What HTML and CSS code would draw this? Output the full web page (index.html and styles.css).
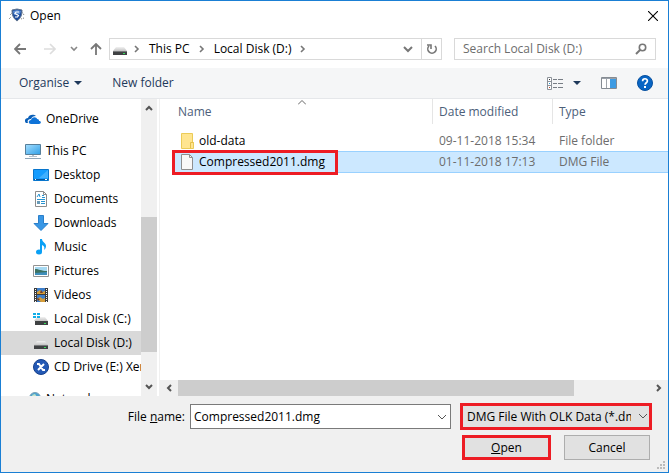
FILE: index.html
```html
<!DOCTYPE html>
<html lang="en">
<head>
    <meta charset="UTF-8">
    <meta name="viewport" content="width=device-width, initial-scale=1.0">
    <title>Open</title>
    <link rel="stylesheet" href="styles.css">
</head>
<body>
    <!-- Shared icons -->
    <svg class="sprite" aria-hidden="true">
        <linearGradient id="driveTop" x1="0" y1="0" x2="0" y2="1">
            <stop offset="0" stop-color="#f2f2f2"/><stop offset="1" stop-color="#c4c4c4"/>
        </linearGradient>
        <linearGradient id="screen" x1="0" y1="0" x2="1" y2="1">
            <stop offset="0" stop-color="#a5deff"/><stop offset="1" stop-color="#2f9fe6"/>
        </linearGradient>
        <symbol id="drive" viewBox="0 0 16 16">
            <path d="M4 6h8l3 4H1z" fill="url(#driveTop)"/>
            <path d="M1 10h14v4H1z" fill="#3f4143"/>
            <path d="M1 10h14v1H1z" fill="#77797b"/>
            <path d="M11 12h2v1h-2z" fill="#35e05a"/>
        </symbol>
        <symbol id="down" viewBox="0 0 10 10">
            <path d="M1 3l4 4 4-4" fill="none" stroke="currentColor"/>
        </symbol>
        <symbol id="crumb" viewBox="0 0 6 8">
            <path d="M1 1l3 3-3 3" fill="none" stroke="#777" stroke-width="1.6"/>
        </symbol>
    </svg>

    <div class="dialog">
        <header class="title-bar">
            <svg class="icon" viewBox="0 0 16 16">
                <path d="M0 11l2-2M1 7l3-3M15 7l-2-3M15 10l-3 1" stroke="#777" stroke-dasharray="1 1"/>
                <path d="M3 2l5-1 5 1c0 5-1 8-5 11C4 10 3 7 3 2z" fill="#1d4c9c" stroke="#61758f"/>
                <path d="M4 3l4-1 4 1-1 3-6 1z" fill="#5b8cd2"/>
                <path d="M10 4H7L6 5.500l3.500 2L8.500 9H6" fill="none" stroke="#fff" stroke-width="1.200"/>
            </svg>
            <h1>Open</h1>
            <button class="plain close" aria-label="Close">
                <svg width="10" height="10" viewBox="0 0 10 10"><path d="M0 0l10 10M10 0L0 10" stroke="#000" stroke-width="1.1"/></svg>
            </button>
        </header>

        <div class="nav-bar">
            <div class="history">
                <button class="plain back" aria-label="Back">
                    <svg width="12" height="12" viewBox="0 0 12 12"><path d="M12 6H1M6 1L1 6l5 5" fill="none" stroke="#777" stroke-width="1.8"/></svg>
                </button>
                <button class="plain forward" aria-label="Forward">
                    <svg width="12" height="12" viewBox="0 0 12 12"><path d="M0 6h11M6 1l5 5-5 5" fill="none" stroke="#ddd" stroke-width="1.6"/></svg>
                </button>
                <button class="plain recent" aria-label="Recent locations">
                    <svg width="8" height="8" viewBox="0 0 8 8"><path d="M1 2l3 3 3-3" fill="none" stroke="#888" stroke-width="1.6"/></svg>
                </button>
                <button class="plain up" aria-label="Up">
                    <svg width="12" height="12" viewBox="0 0 12 12"><path d="M6 12V1M1 6l5-5 5 5" fill="none" stroke="#777" stroke-width="1.8"/></svg>
                </button>
            </div>
            <nav class="address">
                <svg class="icon"><use href="#drive"/></svg>
                <svg class="crumb"><use href="#crumb"/></svg>
                <a href="#">This PC</a>
                <svg class="crumb"><use href="#crumb"/></svg>
                <a href="#">Local Disk (D:)</a>
                <svg class="crumb"><use href="#crumb"/></svg>
                <button class="plain expand" aria-label="Previous locations">
                    <svg width="10" height="8" viewBox="0 0 10 8"><path d="M1 2l4 4 4-4" fill="none" stroke="#777" stroke-width="2"/></svg>
                </button>
                <button class="plain refresh" aria-label="Refresh">
                    <svg width="12" height="12" viewBox="0 0 12 12"><path d="M3 3a4.200 4.200 0 1 0 6 0M1 2h4v4" fill="none" stroke="#777" stroke-width="1.600"/></svg>
                </button>
            </nav>
            <div class="search">
                <input type="text" aria-label="Search" placeholder="Search Local Disk (D:)">
                <svg width="12" height="12" viewBox="0 0 12 12"><circle cx="7.500" cy="4.500" r="3.200" fill="none" stroke="#777" stroke-width="1.600"/><path d="M5 7L1 11" stroke="#777" stroke-width="2"/></svg>
            </div>
        </div>

        <div class="toolbar">
            <button class="plain organise">Organise <span class="caret"></span></button>
            <button class="plain">New folder</button>
            <button class="plain view" aria-label="Change your view">
                <svg width="16" height="13" viewBox="0 0 16 13">
                    <path d="M.5.5h4v12h-4zM.5 4.500h4M.5 8.500h4" fill="#fff" stroke="#8c9299"/>
                    <path d="M6 2.500h4m1 0h5M6 6.500h4m1 0h5M6 10.500h4m1 0h5" stroke="#777d85"/>
                    <path d="M2 2h1v1H2z" fill="#333"/><path d="M2 6h1v1H2z" fill="#269bd8"/><path d="M2 10h1v1H2z" fill="#c44a28"/>
                </svg>
                <span class="caret"></span>
            </button>
            <button class="plain pane" aria-label="Preview pane">
                <svg width="16" height="12" viewBox="0 0 16 12">
                    <path d="M.5.5h15v11H.5z" fill="#fff" stroke="#858b92"/>
                    <path d="M1 1h14v1H1z" fill="#9aa0a8"/><path d="M5.500 2v9" stroke="#a0a5ab"/>
                    <path d="M9 2h6v9H9z" fill="#3d9be3"/>
                </svg>
            </button>
            <button class="plain" aria-label="Help">
                <svg class="icon" viewBox="0 0 16 16">
                    <circle cx="8" cy="8" r="7.500" fill="#0865c4" stroke="#07509f"/>
                    <path d="M5.600 6.200C5.600 3 10.400 3 10.400 6c0 1.800-2.300 1.700-2.300 3.800" fill="none" stroke="#fff" stroke-width="1.700"/>
                    <path d="M7 11h2v2H7z" fill="#fff"/>
                </svg>
            </button>
        </div>

        <div class="browser">
            <nav class="sidebar">
                <ul class="tree">
                    <li class="root"><a href="#">
                        <svg class="icon" viewBox="0 0 16 16">
                            <path d="M1 12c-2-2-1-5 2-5 1-4 6-4 8-2-3 0-4 1-5 3-3 0-4 2-3 4z" fill="#0a5fb8"/>
                            <path d="M6 13c-3 0-3-4 0-4 1-4 6-3 6-1 2 0 2 1 2 2 3 0 2 3 0 3z" fill="#0f73d8"/>
                        </svg>OneDrive</a></li>
                    <li class="root"><a href="#">
                        <svg class="icon" viewBox="0 0 16 16">
                            <path d="M.5 1.500h15v10H.5z" fill="url(#screen)" stroke="#577f9a"/>
                            <path d="M7 12h2v1h3v1H4v-1h3z" fill="#b6c2cc"/><path d="M0 15h16v1H0z" fill="#8fa6b8"/>
                        </svg>This PC</a></li>
                    <li><a href="#">
                        <svg class="icon" viewBox="0 0 16 16">
                            <path d="M.5 2.500h15v11H.5z" fill="#149cff" stroke="#0875cc"/>
                            <path d="M15 3v8L6 11z" fill="#3fb0ff"/><path d="M1 12h14v1H1z" fill="#07569c"/><path d="M2 12h1v1H2zm10 0h2v1h-2z" fill="#fff"/>
                        </svg>Desktop</a></li>
                    <li><a href="#">
                        <svg class="icon" viewBox="0 0 16 16">
                            <path d="M2.500.5h8l3 3v12h-11z" fill="#fff" stroke="#8c8c8c"/><path d="M10.500.5v3h3" fill="none" stroke="#8c8c8c"/>
                            <path d="M4 6l2-3 1 3M9 4.500h2M9 6.500h3M4 8.500h8M8 10.500h4M8 12.500h4" fill="none" stroke="#2794d2"/>
                            <path d="M4 10h3v3H4z" fill="#699bb8"/>
                        </svg>Documents</a></li>
                    <li><a href="#">
                        <svg class="icon" viewBox="0 0 16 16"><path d="M5.500.5h5v8h4.500L8 15.500 1 8.500h4.500z" fill="#3997e5" stroke="#2a7fca"/></svg>Downloads</a></li>
                    <li><a href="#">
                        <svg class="icon" viewBox="0 0 16 16">
                            <path d="M7 0h2c0 3 4 4 4 7 0 2-1 3-2 4 1-3 0-4-2-5v7H7z" fill="#0aa0f5"/><ellipse cx="6" cy="13" rx="3" ry="2.500" fill="#0aa0f5"/>
                        </svg>Music</a></li>
                    <li><a href="#">
                        <svg class="icon" viewBox="0 0 16 16">
                            <path d="M.5 2.500h15v11H.5z" fill="#fff" stroke="#929292"/><path d="M2 4h12v8H2z" fill="#a6d9f2"/>
                            <path d="M2 6c4 0 6 2 12 2v2H2z" fill="#3d7262"/><path d="M2 10l12-1v3H2z" fill="#3f8fbc"/>
                        </svg>Pictures</a></li>
                    <li><a href="#">
                        <svg class="icon" viewBox="0 0 16 16">
                            <path d="M1 1h14v14H1z" fill="#3c3c3c"/><path d="M4 1h8v6H4zm0 7h8v7H4z" fill="#3f7fca"/>
                            <path d="M4 5l3-2 2 2 3-1v3H4zm0 7l3-2 3 2 2-1v4H8z" fill="#d69d38"/><path d="M8 3l2 3H7zm-4 8l3 1-2 2z" fill="#733c2b"/>
                            <path d="M2.500 2v13M13.500 2v13" stroke="#fff" stroke-dasharray="1 1"/>
                        </svg>Videos</a></li>
                    <li><a href="#">
                        <svg class="icon" viewBox="0 0 16 16">
                            <path d="M4 6h8l3 4H1z" fill="url(#driveTop)"/><path d="M2 10h13v4H2z" fill="#3f4143"/><path d="M11 12h2v1h-2z" fill="#35e05a"/>
                            <path d="M0 2h3v2H0zm4 0h3v2H4zM0 5h3v2H0zm4 0h3v2H4z" fill="#12aee8"/>
                        </svg>Local Disk (C:)</a></li>
                    <li class="selected"><a href="#"><svg class="icon"><use href="#drive"/></svg>Local Disk (D:)</a></li>
                    <li><a href="#">
                        <svg class="icon" viewBox="0 0 16 16">
                            <circle cx="8" cy="8" r="7.500" fill="#2459b5" stroke="#17418c"/>
                            <path d="M4 5h2l4 6h2M11 5L5 11" fill="none" stroke="#fff" stroke-width="2"/>
                        </svg>CD Drive (E:) Xen</a></li>
                    <li class="root"><a href="#">
                        <svg class="icon" viewBox="0 0 16 16">
                            <circle cx="10" cy="7" r="5.500" fill="#4ca3d0" stroke="#7ba1b5"/><path d="M7 4l3-1 2 3-3 2z" fill="#c1e4c8"/><path d="M0 8h9v7H0z" fill="#3c9de0"/>
                        </svg>Network</a></li>
                </ul>
                <div class="scroll-y">
                    <svg width="10" height="10" viewBox="0 0 10 10"><path d="M2 7l3-3 3 3" fill="none" stroke="#555" stroke-width="2"/></svg>
                    <div class="track"><div class="thumb"></div></div>
                    <svg width="10" height="10" viewBox="0 0 10 10"><path d="M2 3l3 3 3-3" fill="none" stroke="#555" stroke-width="2"/></svg>
                </div>
            </nav>

            <main class="files">
                <table>
                    <thead>
                        <tr>
                            <th class="name">Name
                                <svg class="sort" width="8" height="5" viewBox="0 0 8 5"><path d="M0 4.500l4-4 4 4" fill="none" stroke="#666"/></svg>
                            </th>
                            <th class="date">Date modified</th>
                            <th>Type</th>
                        </tr>
                    </thead>
                    <tbody>
                        <tr>
                            <td class="name"><div class="file">
                                <svg class="icon" viewBox="0 0 16 16"><path d="M2.500.5h11v9h1v6h-12z" fill="#ffe590" stroke="#ebcb57"/><path d="M11.500 15V9.500h3" fill="none" stroke="#e5c04a"/></svg>old-data
                            </div></td>
                            <td>09-11-2018 15:34</td>
                            <td>File folder</td>
                        </tr>
                        <tr class="selected">
                            <td class="name"><div class="file">
                                <svg class="icon" viewBox="0 0 16 16"><path d="M2.500.5h8l3 3v12h-11z" fill="#f8f8f8" stroke="#8e8e8e"/><path d="M10.500.5v3h3" fill="none" stroke="#8e8e8e"/></svg>Compressed2011.dmg
                            </div><span class="highlight"></span></td>
                            <td>01-11-2018 17:13</td>
                            <td>DMG File</td>
                        </tr>
                    </tbody>
                </table>
                <div class="scroll-x">
                    <svg width="10" height="10" viewBox="0 0 10 10"><path d="M7 2L4 5l3 3" fill="none" stroke="#555" stroke-width="2"/></svg>
                    <div class="track"><div class="thumb"></div></div>
                    <svg width="10" height="10" viewBox="0 0 10 10"><path d="M3 2l3 3-3 3" fill="none" stroke="#555" stroke-width="2"/></svg>
                </div>
            </main>
        </div>

        <footer class="actions">
            <div class="row">
                <label for="fileName">File <u>n</u>ame:</label>
                <div class="combo">
                    <input type="text" id="fileName" value="Compressed2011.dmg">
                    <svg class="arrow"><use href="#down"/></svg>
                </div>
                <div class="filter">
                    <select aria-label="File type">
                        <option>DMG File With OLK Data (*.dmg)</option>
                    </select>
                    <svg class="arrow"><use href="#down"/></svg>
                </div>
            </div>
            <div class="row buttons">
                <button class="open"><u>O</u>pen</button>
                <button class="cancel">Cancel</button>
            </div>
            <svg class="grip" width="8" height="8" viewBox="0 0 8 8"><path d="M6 0h2v2H6zM3 3h2v2H3zm3 0h2v2H6zM0 6h2v2H0zm3 0h2v2H3zm3 0h2v2H6z" fill="#bbb"/></svg>
        </footer>
    </div>
</body>
</html>
```
FILE: styles.css
```css
* {
    box-sizing: border-box;
}
body {
    margin: 0;
    font-family: "Open Sans", "Noto Sans", sans-serif;
    font-size: 12px;
    line-height: 16px;
    color: #000;
}
button, input, select {
    font: inherit;
    color: inherit;
}
a {
    color: inherit;
    text-decoration: none;
}
svg {
    display: block;
    flex: none;
}
.sprite {
    position: absolute;
    width: 0;
    height: 0;
}
.icon {
    width: 16px;
    height: 16px;
}
.plain {
    display: flex;
    align-items: center;
    padding: 0;
    border: none;
    background: none;
}
.dialog {
    display: flex;
    flex-direction: column;
    height: 100vh;
    border: 1px solid #1a7fd4;
    background: #fff;
}

/* Title */
.title-bar {
    display: flex;
    align-items: center;
    height: 30px;
    padding: 0 10px 0 8px;
}
.title-bar h1 {
    margin: 0 0 0 5px;
    font-size: 12px;
    font-weight: normal;
}
.close {
    margin-left: auto;
}

/* Navigation */
.nav-bar {
    display: flex;
    align-items: center;
    height: 36px;
    margin-bottom: 1px;
    padding: 0 12px 0 13px;
}
.history {
    display: flex;
    align-items: center;
    width: 95px;
}
.forward {
    margin-left: 18px;
}
.recent {
    margin-left: 14px;
}
.up {
    margin-left: 12px;
}
.address, .search {
    display: flex;
    align-items: center;
    height: 22px;
    border: 1px solid #d9d9d9;
}
.address {
    flex: 1;
    padding-left: 2px;
    white-space: nowrap;
}
.crumb {
    width: 6px;
    height: 8px;
    margin: 0 9px;
}
.address .icon + .crumb {
    margin-left: 6px;
}
.expand {
    margin-left: auto;
    padding-right: 8px;
}
.refresh {
    justify-content: center;
    width: 20px;
    height: 20px;
    border-left: 1px solid #d9d9d9;
}
.search {
    width: 202px;
    margin-left: 12px;
    padding: 0 8px;
}
.search input {
    flex: 1;
    min-width: 0;
    padding: 0;
    border: none;
    outline: none;
}
.search input::placeholder {
    color: #6d6d6d;
}

/* Toolbar */
.toolbar {
    display: flex;
    align-items: center;
    height: 31px;
    padding: 0 15px 0 18px;
    border-bottom: 1px solid #e5e7ea;
    background: #f5f6f7;
    color: #1e395b;
}
.caret {
    border: 4px solid transparent;
    border-top-color: #1e395b;
    border-bottom: none;
}
.organise {
    gap: 5px;
    margin-right: 30px;
}
.view {
    gap: 10px;
    margin-left: auto;
}
.pane {
    margin: 0 20px;
}

/* Folder tree */
.browser {
    display: flex;
    flex: 1;
    min-height: 0;
}
.sidebar {
    display: flex;
    width: 159px;
    padding-right: 2px;
    border-right: 1px solid #f0f0f0;
}
.tree {
    flex: 1;
    min-width: 0;
    margin: 0;
    padding: 0;
    overflow: hidden;
    list-style: none;
}
.tree a {
    display: flex;
    align-items: center;
    gap: 5px;
    height: 24px;
    padding-left: 32px;
    overflow: hidden;
    white-space: nowrap;
}
.tree .root {
    margin-top: 8px;
}
.tree .root a {
    padding-left: 24px;
}
.tree .selected {
    background: #d9d9d9;
}
.scroll-y, .scroll-x {
    display: flex;
    align-items: center;
    background: #f0f0f0;
}
.scroll-y {
    flex-direction: column;
    width: 16px;
    padding: 4px 0;
}
.track {
    flex: 1;
}
.thumb {
    background: #cdcdcd;
}
.scroll-y .track {
    display: flex;
    width: 100%;
    padding: 3px 0 30px;
    align-items: flex-end;
}
.scroll-y .thumb {
    width: 100%;
    height: 57%;
}

/* File list */
.files {
    display: flex;
    flex: 1;
    flex-direction: column;
    justify-content: space-between;
    min-width: 0;
}
table {
    table-layout: fixed;
    width: calc(100% - 15px);
    margin-left: 15px;
    border-spacing: 0;
}
th {
    height: 25px;
    padding: 0 6px;
    border-left: 1px solid #e5e5e5;
    font-weight: normal;
    text-align: left;
    color: #4c607a;
}
th.name {
    position: relative;
    width: 257px;
    padding-left: 3px;
    border-left: none;
}
th.date {
    width: 120px;
}
.sort {
    position: absolute;
    top: 1px;
    left: 48%;
}
tbody::before {
    content: "";
    display: block;
    height: 6px;
}
td {
    height: 21px;
    padding: 0 7px;
    color: #6d6d6d;
}
td.name {
    position: relative;
    padding-left: 4px;
    color: #000;
}
.file {
    display: flex;
    align-items: center;
    gap: 4px;
}
.files .selected td {
    height: 22px;
    border: solid #99d1ff;
    border-width: 1px 0;
    background: #cce8ff;
}
.highlight {
    position: absolute;
    top: -2px;
    left: -3px;
    width: 166px;
    height: 25px;
    border: 3px solid #ed1c24;
}
.scroll-x {
    height: 16px;
    padding: 0 4px;
}
.scroll-x .track {
    height: 100%;
    padding: 0 4px;
}
.scroll-x .thumb {
    width: 84%;
    height: 100%;
}

/* Bottom controls */
.actions {
    position: relative;
    height: 76px;
    padding: 7px 16px 0 0;
    background: #f0f0f0;
}
.row {
    display: flex;
    align-items: center;
}
.row label {
    width: 184px;
    margin-right: 5px;
    text-align: right;
}
.combo {
    position: relative;
    flex: 1;
    height: 25px;
}
.combo input {
    width: 100%;
    height: 100%;
    padding: 0 20px 0 3px;
    border: 1px solid #7a7a7a;
    background: #fff;
}
.filter {
    position: relative;
    width: 192px;
    height: 27px;
    margin-left: 9px;
}
.filter select {
    appearance: none;
    width: 100%;
    height: 100%;
    padding: 0 18px 0 4px;
    border: 3px solid #ed1c24;
    border-radius: 0;
    background: #e1e1e1;
}
.arrow {
    position: absolute;
    top: 8px;
    right: 4px;
    width: 10px;
    height: 10px;
    color: #555;
    pointer-events: none;
}
.buttons {
    gap: 13px;
    justify-content: flex-end;
    margin-top: 5px;
    padding-right: 2px;
}
.buttons button {
    height: 25px;
    padding: 0;
    background: #e1e1e1;
}
.open {
    width: 89px;
    border: 3px solid #ed1c24;
}
.cancel {
    width: 86px;
    border: 1px solid #adadad;
}
.grip {
    position: absolute;
    right: 3px;
    bottom: 3px;
}
```
